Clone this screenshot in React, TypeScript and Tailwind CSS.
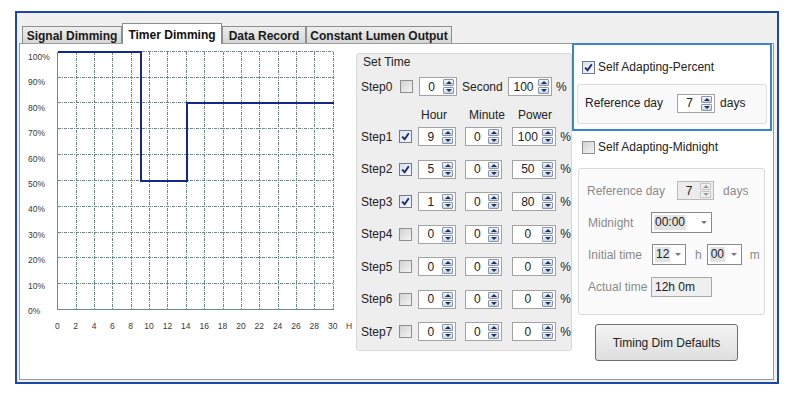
import React from 'react';
import clsx from 'clsx';

// chart geometry, in svg pixels (svg sits at the panel's inner top-left)
const X0 = 37.3;
const DX = 18.36;
const Y0 = 6.7;
const DY = 25.83;
const px = (v: number) => Math.round(v) + 0.5;

const Chart = () => {
  const hx = (h: number) => X0 + (h / 2) * DX;
  const py = (p: number) => Y0 + ((100 - p) / 10) * DY;
  const bottom = Y0 + 10 * DY;
  const right = X0 + 15 * DX;
  const line = `M${px(hx(0))} ${px(py(100))} H${px(hx(9))} V${px(py(50))} H${px(hx(14))} V${px(py(80))} H${px(right)}`;

  return (
    <svg width="336" height="300" className="block shrink-0" fontFamily="Liberation Sans, Arial, sans-serif">
      {Array.from({ length: 16 }, (_, i) => (
        <line
          key={'v' + i}
          x1={px(X0 + i * DX)}
          x2={px(X0 + i * DX)}
          y1={px(Y0)}
          y2={px(bottom)}
          stroke="#6a8a8c"
          strokeDasharray={i === 0 ? undefined : '3 1 1 1'}
          shapeRendering="crispEdges"
        />
      ))}
      {Array.from({ length: 11 }, (_, i) => (
        <line
          key={'h' + i}
          x1={px(X0)}
          x2={px(right)}
          y1={px(Y0 + i * DY)}
          y2={px(Y0 + i * DY)}
          stroke="#6a8a8c"
          strokeDasharray={i === 10 ? undefined : '3 1 1 1'}
          shapeRendering="crispEdges"
        />
      ))}
      <path d={line} fill="none" stroke="#14288c" strokeWidth="2" shapeRendering="crispEdges" />
      {Array.from({ length: 11 }, (_, i) => (
        <text key={'yl' + i} x="8" y={16 + i * 25.4} fontSize="8.5" fill="#3a3a3a">
          {100 - i * 10}%
        </text>
      ))}
      {Array.from({ length: 16 }, (_, i) => (
        <text key={'xl' + i} x={X0 + i * DX} y="285" fontSize="8.5" fill="#3a3a3a" textAnchor="middle">
          {i * 2}
        </text>
      ))}
      <text x="326" y="285" fontSize="8.5" fill="#3a3a3a">H</text>
    </svg>
  );
};

const Arrow = ({ up, dim }: { up?: boolean; dim?: boolean }) => (
  <div
    className={clsx(
      'w-0 h-0 border-x-[3px] border-x-transparent',
      up ? 'border-b-[3px]' : 'border-t-[3px]',
      up ? (dim ? 'border-b-[#9a9a9a]' : 'border-b-[#1e2f5e]') : dim ? 'border-t-[#9a9a9a]' : 'border-t-[#1e2f5e]'
    )}
  />
);

const Spin = ({ v, w, disabled }: { v: string; w: string; disabled?: boolean }) => (
  <div
    className={clsx(
      'h-[19px] flex items-center border shrink-0',
      w,
      disabled ? 'bg-[#ececec] border-[#b9b9b9]' : 'bg-white border-[#a3a3a3]'
    )}
  >
    <span className="flex-1 text-center leading-none text-[12px] text-[#222]">{v}</span>
    <div className="w-[11px] h-[15px] mr-[2px] flex flex-col gap-px">
      {[true, false].map((up) => (
        <div
          key={String(up)}
          className={clsx(
            'flex-1 flex items-center justify-center border rounded-[1px]',
            disabled
              ? 'border-[#c4c4c4] bg-[#f0f0f0]'
              : 'border-[#8795ad] bg-linear-to-b from-[#f4f7fb] to-[#c8d2e2]'
          )}
        >
          <Arrow up={up} dim={disabled} />
        </div>
      ))}
    </div>
  </div>
);

const Check = ({ on }: { on?: boolean }) => (
  <div
    className={clsx(
      'w-[13px] h-[13px] border shrink-0 flex items-center justify-center',
      on ? 'border-[#6d7a92] bg-linear-to-br from-[#d9e2f0] to-[#f7f9fc]' : 'border-[#8f8f8f] bg-linear-to-br from-[#d2d2d2] to-[#f4f4f4]'
    )}
  >
    {on && (
      <svg width="9" height="9" viewBox="0 0 9 9">
        <path d="M1.2 4.6 L3.6 7.2 L7.8 1.2" fill="none" stroke="#1b2a6b" strokeWidth="1.9" />
      </svg>
    )}
  </div>
);

const Combo = ({ v, w }: { v: string; w: string }) => (
  <div className={clsx('h-[21px] border border-[#8a8a8a] bg-white flex items-center pl-[2px] pr-[4px] shrink-0', w)}>
    <span className="bg-[#e3e3e3] px-px text-[#222] leading-[15px] text-[12px]">{v}</span>
    <span className="flex-1" />
    <div className="w-0 h-0 border-x-[3px] border-x-transparent border-t-[3px] border-t-[#777]" />
  </div>
);

const steps = [
  { h: '9', m: '0', p: '100', on: true },
  { h: '5', m: '0', p: '50', on: true },
  { h: '1', m: '0', p: '80', on: true },
  { h: '0', m: '0', p: '0', on: false },
  { h: '0', m: '0', p: '0', on: false },
  { h: '0', m: '0', p: '0', on: false },
  { h: '0', m: '0', p: '0', on: false },
];

const tabs = [
  { name: 'Signal Dimming', w: 'w-[100px]' },
  { name: 'Timer Dimming', w: 'w-[100px]', active: true },
  { name: 'Data Record', w: 'w-[84px]' },
  { name: 'Constant Lumen Output', w: 'w-[146px]' },
];

export default function App() {
  return (
    <div className="w-[790px] h-[394px] bg-white pl-[15px] pt-[11px] font-['Liberation_Sans',Arial,sans-serif] text-[12px] text-[#222] overflow-hidden">
      <div className="w-[764px] h-[373px] border-2 border-[#1c47a8] bg-[#f0f0f0] flex flex-col pt-[10px] pl-[2px] pr-[3px] pb-[2px]">
        {/* Tabs */}
        <div className="flex items-end h-[20px] pl-[3px]">
          {tabs.map((t) => (
            <div
              key={t.name}
              className={clsx(
                'border border-[#8d8d8d] border-b-0 font-bold text-[12px] flex justify-center leading-none',
                t.w,
                t.active
                  ? 'h-[21px] -mb-px relative z-10 bg-white pt-[5px] text-[#111]'
                  : 'h-[17px] bg-linear-to-b from-[#eeeeee] to-[#d6d6d6] pt-[3px] text-[#1a1a1a]'
              )}
            >
              {t.name}
            </div>
          ))}
        </div>

        {/* Tab panel */}
        <div className="flex-1 border border-[#9a9a9a] bg-white flex">
          <Chart />

          {/* Set Time */}
          <div className="w-[216px] h-[298px] mt-[9px] bg-[#eeeeee] border border-[#d9d9d9] rounded-[3px] flex flex-col shrink-0">
            <div className="ml-[6px] leading-[14px] mt-px">Set Time</div>
            <div className="flex items-center h-[19px] mt-[8px] pl-[4px]">
              <span className="w-[39px]">Step0</span>
              <Check />
              <div className="ml-[6px]">
                <Spin v="0" w="w-[38px]" />
              </div>
              <span className="ml-[5px] w-[46px]">Second</span>
              <Spin v="100" w="w-[44px]" />
              <span className="ml-[4px]">%</span>
            </div>
            <div className="flex h-[14px] leading-[14px] mt-[12px] pl-[64px]">
              <span className="w-[48px]">Hour</span>
              <span className="w-[49px]">Minute</span>
              <span>Power</span>
            </div>
            <div className="flex flex-col gap-[13.5px] mt-[5px]">
              {steps.map((s, i) => (
                <div key={i} className="flex items-center h-[19px] pl-[4px]">
                  <span className="w-[39px]">Step{i + 1}</span>
                  <Check on={s.on} />
                  <div className="ml-[6px]">
                    <Spin v={s.h} w="w-[38px]" />
                  </div>
                  <div className="ml-[9px]">
                    <Spin v={s.m} w="w-[37px]" />
                  </div>
                  <div className="ml-[10px]">
                    <Spin v={s.p} w="w-[44px]" />
                  </div>
                  <span className="ml-[4px]">%</span>
                </div>
              ))}
            </div>
          </div>

          {/* Right column */}
          <div className="w-[200px] -mt-px flex flex-col shrink-0">
            <div className="h-[88px] border-2 border-[#3a86cc] bg-white flex flex-col">
              <div className="flex items-center h-[14px] mt-[15px] pl-[8px]">
                <Check on />
                <span className="ml-[3px]">Self Adapting-Percent</span>
              </div>
              <div className="ml-[3px] mt-[10px] w-[190px] h-[40px] bg-[#f9f9f9] border border-[#dcdcdc] rounded-[3px] flex items-center pl-[7px] pb-[2px]">
                <span>Reference day</span>
                <div className="ml-[14px]">
                  <Spin v="7" w="w-[38px]" />
                </div>
                <span className="ml-[5px]">days</span>
              </div>
            </div>

            <div className="flex items-center h-[14px] mt-[9px] pl-[10px]">
              <Check />
              <span className="ml-[3px]">Self Adapting-Midnight</span>
            </div>

            <div className="ml-[6px] mt-[14px] w-[187px] h-[147px] bg-[#fbfbfb] border border-[#dadada] rounded-[3px] flex flex-col pl-[8px] pt-[11px] gap-[11px] text-[#8a8a8a]">
              <div className="flex items-center h-[21px]">
                <span>Reference day</span>
                <div className="ml-[12px]">
                  <Spin v="7" w="w-[37px]" disabled />
                </div>
                <span className="ml-[9px]">days</span>
              </div>
              <div className="flex items-center h-[21px] pl-[1px]">
                <span className="w-[63px]">Midnight</span>
                <Combo v="00:00" w="w-[61px]" />
              </div>
              <div className="flex items-center h-[21px] pl-[1px]">
                <span className="w-[64px]">Initial time</span>
                <Combo v="12" w="w-[34px]" />
                <span className="ml-[9px]">h</span>
                <div className="ml-[5px]">
                  <Combo v="00" w="w-[35px]" />
                </div>
                <span className="ml-[8px]">m</span>
              </div>
              <div className="flex items-center h-[21px] pl-[1px]">
                <span className="w-[63px]">Actual time</span>
                <div className="w-[61px] h-[20px] border border-[#a8a8a8] bg-[#efefef] text-[#222] pl-[3px] leading-[18px]">
                  12h 0m
                </div>
              </div>
            </div>

            <button className="ml-[23px] mt-[9px] w-[143px] h-[37px] border border-[#6f6f6f] rounded-[3px] bg-linear-to-b from-[#f4f4f4] to-[#dedede] text-[12px] text-[#222]">
              Timing Dim Defaults
            </button>
          </div>
        </div>
      </div>
    </div>
  );
}
